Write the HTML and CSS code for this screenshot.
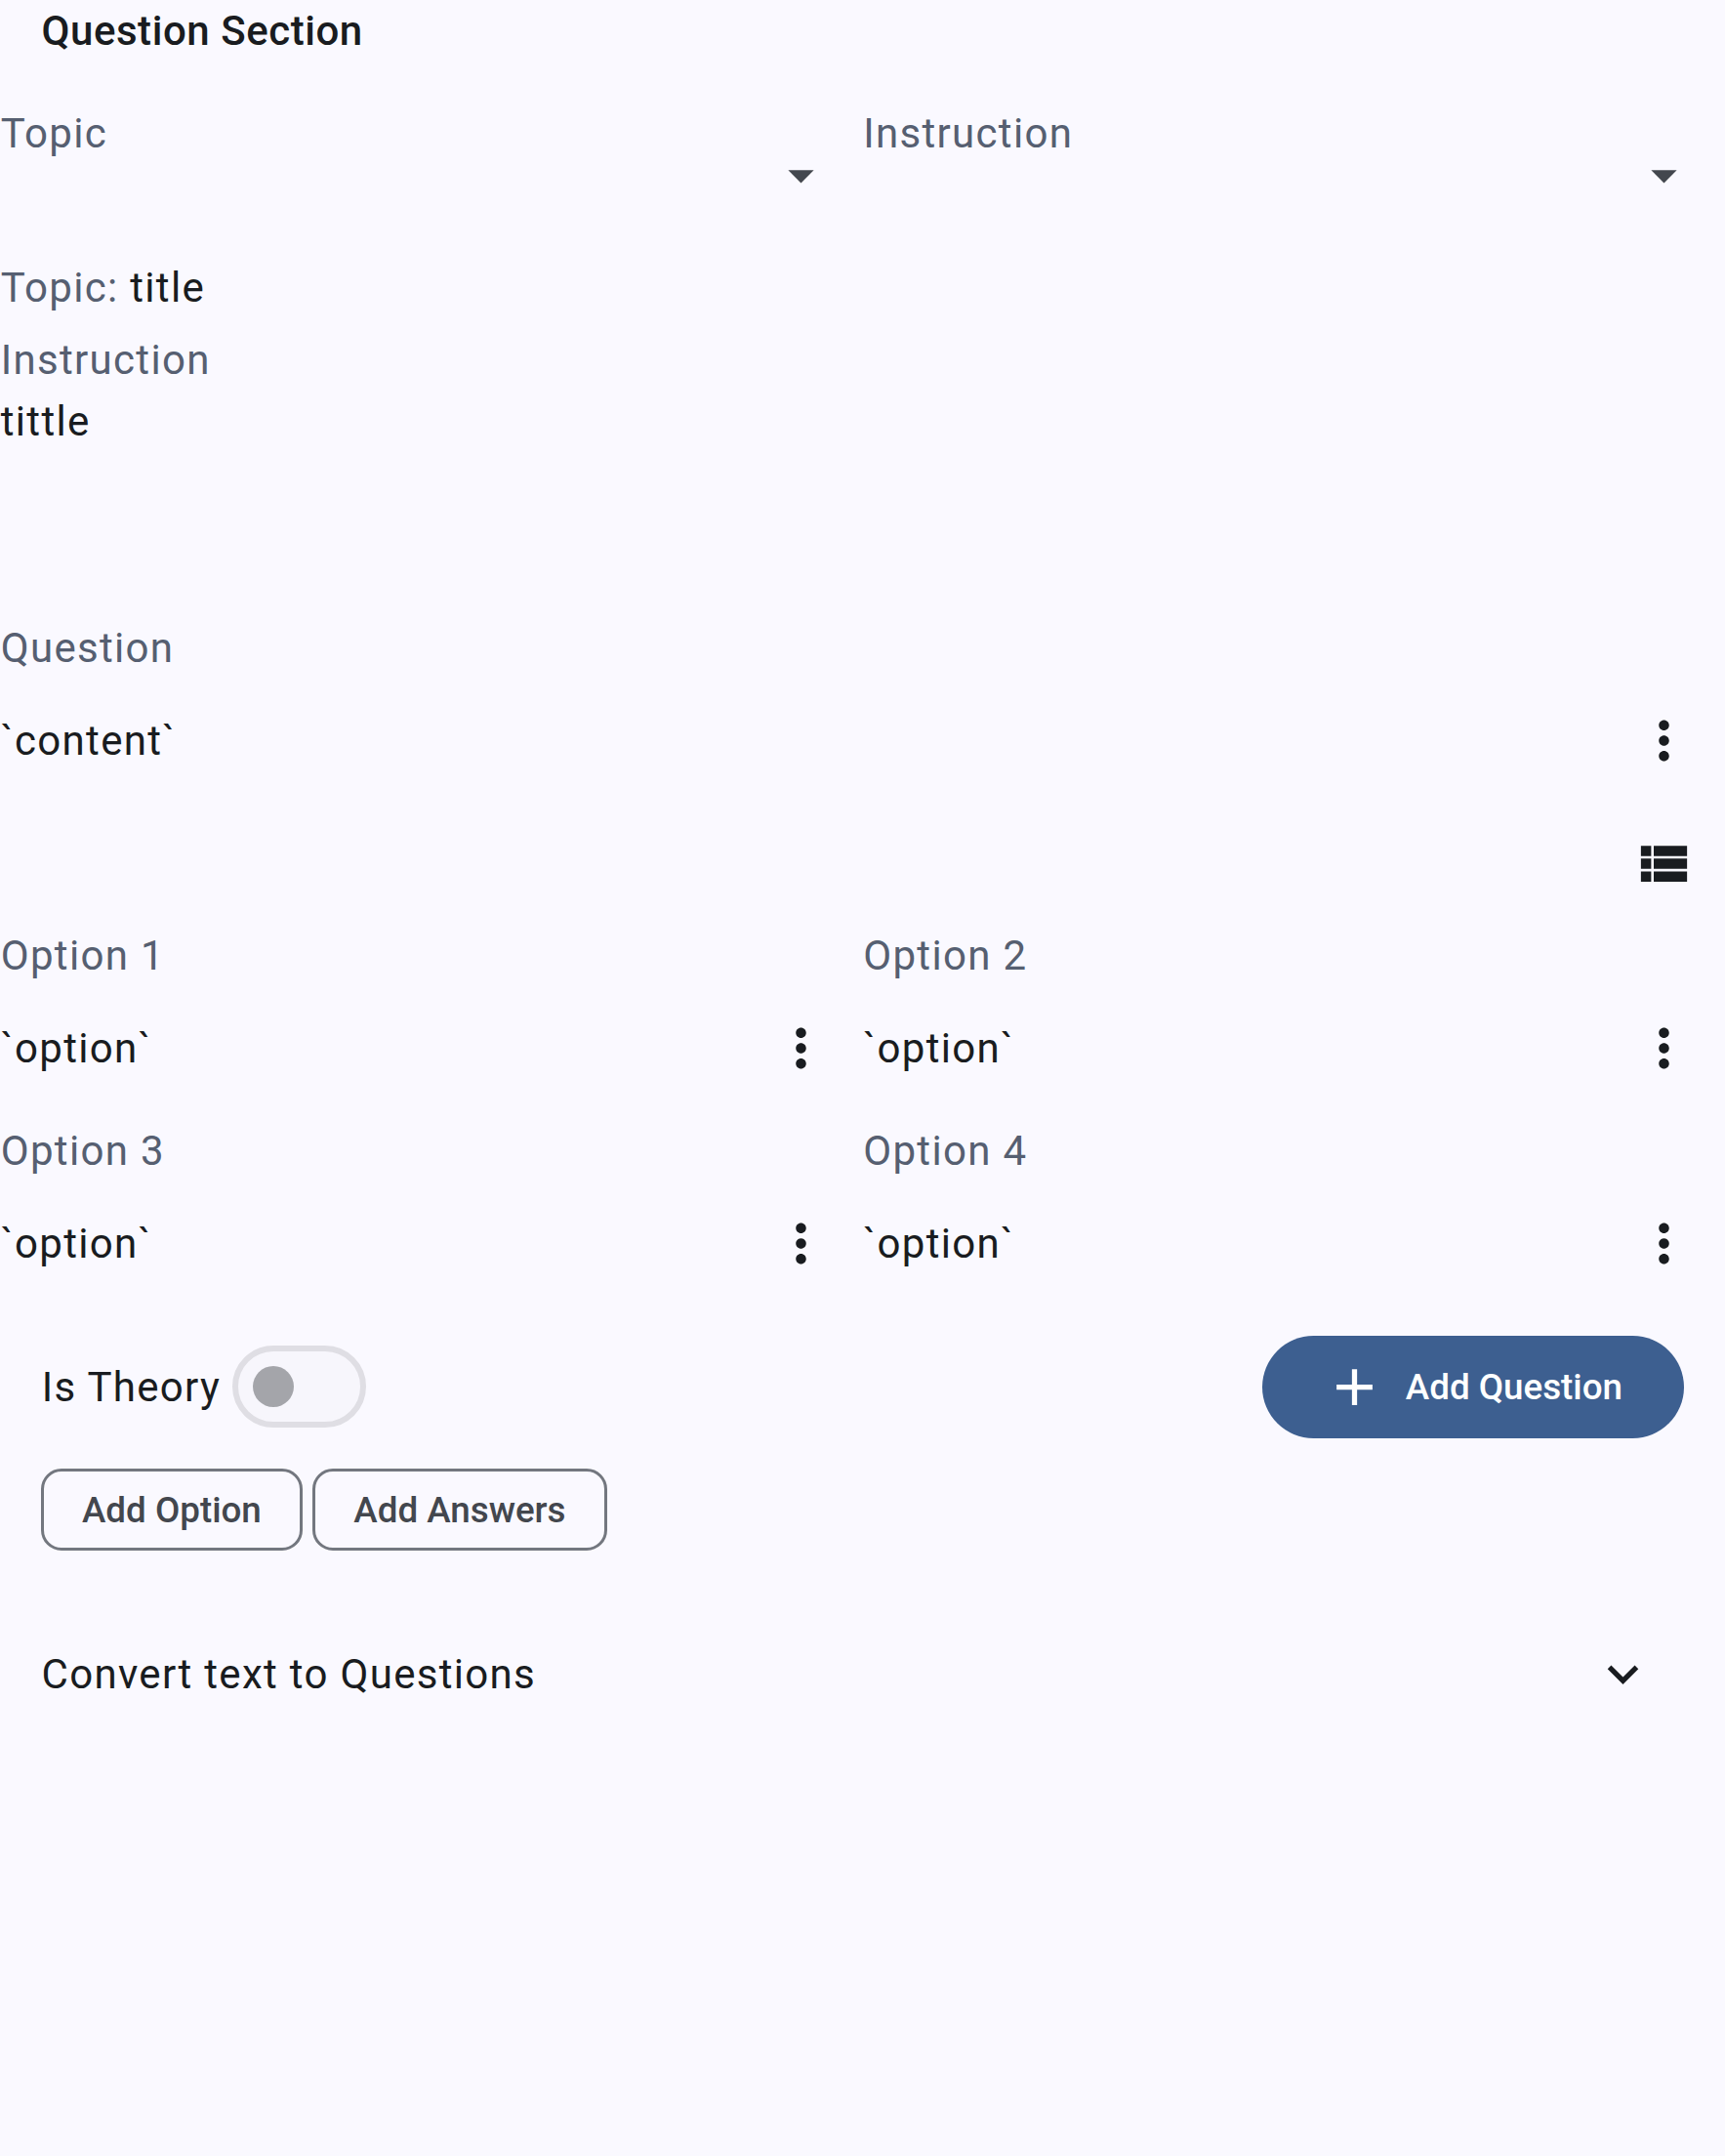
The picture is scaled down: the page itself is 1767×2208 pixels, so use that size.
FILE: index.html
```html
<!DOCTYPE html>
<html lang="en">
<head>
<meta charset="utf-8">
<title>Question Section</title>
<link rel="stylesheet" href="styles.css">
</head>
<body>
<svg class="defs" aria-hidden="true">
  <symbol id="drop" viewBox="0 0 24 24"><path d="M7 10l5 5 5-5z"/></symbol>
  <symbol id="more" viewBox="0 0 24 24"><path d="M12 8c1.100 0 2-.9 2-2s-.9-2-2-2-2 .9-2 2 .9 2 2 2zm0 2c-1.100 0-2 .9-2 2s.9 2 2 2 2-.9 2-2-.9-2-2-2zm0 6c-1.100 0-2 .9-2 2s.9 2 2 2 2-.9 2-2-.9-2-2-2z"/></symbol>
  <symbol id="list" viewBox="0 0 24 24"><path d="M3 14h4v-4H3v4zm0 5h4v-4H3v4zM3 9h4V5H3v4zm5 5h13v-4H8v4zm0 5h13v-4H8v4zM8 5v4h13V5H8z"/></symbol>
  <symbol id="add" viewBox="0 0 24 24"><path d="M19 13h-6v6h-2v-6H5v-2h6V5h2v6h6v2z"/></symbol>
  <symbol id="down" viewBox="0 0 24 24"><path d="M7.410 8.590L12 13.170l4.590-4.580L18 10l-6 6-6-6z"/></symbol>
</svg>
<main class="page">
  <h1 class="title">Question Section</h1>

  <section class="pickers">
    <div class="picker"><span class="label">Topic</span><span class="icon-button muted"><svg class="icon"><use href="#drop"/></svg></span></div>
    <div class="picker"><span class="label">Instruction</span><span class="icon-button muted"><svg class="icon"><use href="#drop"/></svg></span></div>
  </section>

  <section class="summary">
    <p class="topic"><span class="label">Topic:</span> title</p>
    <p class="label">Instruction</p>
    <p>tittle</p>
  </section>

  <section class="question">
    <p class="label">Question</p>
    <div class="field"><span>`content`</span><span class="icon-button"><svg class="icon"><use href="#more"/></svg></span></div>
    <div class="view-row"><span class="icon-button"><svg class="icon"><use href="#list"/></svg></span></div>
  </section>

  <section class="options">
    <div class="option"><p class="label">Option 1</p><div class="field"><span>`option`</span><span class="icon-button"><svg class="icon"><use href="#more"/></svg></span></div></div>
    <div class="option"><p class="label">Option 2</p><div class="field"><span>`option`</span><span class="icon-button"><svg class="icon"><use href="#more"/></svg></span></div></div>
    <div class="option"><p class="label">Option 3</p><div class="field"><span>`option`</span><span class="icon-button"><svg class="icon"><use href="#more"/></svg></span></div></div>
    <div class="option"><p class="label">Option 4</p><div class="field"><span>`option`</span><span class="icon-button"><svg class="icon"><use href="#more"/></svg></span></div></div>
  </section>

  <section class="controls">
    <div class="theory"><span class="theory-label">Is Theory</span><span class="switch"><span class="thumb"></span></span></div>
    <button class="button filled"><svg class="icon"><use href="#add"/></svg><span class="button-text">Add Question</span></button>
  </section>

  <section class="chips">
    <button class="button chip"><span class="button-text">Add Option</span></button>
    <button class="button chip"><span class="button-text">Add Answers</span></button>
  </section>

  <section class="convert"><span>Convert text to Questions</span><svg class="icon"><use href="#down"/></svg></section>
</main>
</body>
</html>
```

FILE: styles.css
```css
* { box-sizing: border-box; }

body {
  margin: 0;
  background: #faf9ff;
  color: #191c20;
  font-family: Roboto, sans-serif;
  font-size: 42px;
  line-height: 63px;
  letter-spacing: 1.3125px;
}

p { margin: 0; }

.defs { display: none; }

.page { min-height: 2208px; }

.title {
  margin: 0 42.5px 42px;
  font-size: 42px;
  font-weight: 500;
  letter-spacing: 0.55px;
}

.label { color: #565f71; }

.icon {
  display: block;
  width: 63px;
  height: 63px;
  fill: currentColor;
}

.icon-button {
  display: flex;
  align-items: center;
  justify-content: center;
  flex: none;
  width: 126px;
  height: 126px;
}

.muted { color: #43474e; }

.pickers {
  display: grid;
  grid-template-columns: 1fr 1fr;
}

.picker {
  display: flex;
  justify-content: space-between;
  padding-left: 0.75px;
}

.picker .icon-button { margin-top: 11px; }

.summary { padding: 21px 0 0 0.75px; }

.topic { margin-bottom: 11px; }

.question { margin-top: 169px; }

.question .label,
.option .label {
  height: 63.5px;
  padding-left: 0.75px;
}

.field {
  display: flex;
  align-items: center;
  justify-content: space-between;
  height: 126px;
  padding-left: 0.75px;
}

.view-row {
  display: flex;
  justify-content: flex-end;
}

.options {
  display: grid;
  grid-template-columns: 1fr 1fr;
  row-gap: 10.5px;
  margin-top: -0.5px;
}

.controls {
  display: flex;
  align-items: center;
  justify-content: space-between;
  padding: 31.5px 42px 0;
}

.theory {
  display: flex;
  align-items: center;
}

.theory-label {
  width: 196px;
  padding-left: 0.75px;
  white-space: nowrap;
}

.switch {
  display: flex;
  align-items: center;
  width: 137px;
  height: 84px;
  margin-bottom: 1px;
  padding-left: 15px;
  border: 6px solid #dfdee4;
  border-radius: 42px;
  background: #f7f6fc;
}

.thumb {
  width: 42px;
  height: 42px;
  border-radius: 50%;
  background: #a4a5aa;
}

.button {
  display: flex;
  align-items: center;
  font: 500 36.75px/52.5px Roboto, sans-serif;
  letter-spacing: 0;
}

.button-text { padding-top: 2px; }

.filled {
  gap: 21px;
  height: 105px;
  padding: 0 63px;
  border: 0;
  border-radius: 52.5px;
  background: #3d5f90;
  color: #fff;
}

.chips {
  display: flex;
  gap: 10.5px;
  padding: 31px 42px 0;
}

.chip {
  height: 84px;
  padding: 0 39px;
  border: 3px solid #73777f;
  border-radius: 21px;
  background: transparent;
  color: #43474e;
}

.convert {
  display: flex;
  align-items: center;
  justify-content: space-between;
  padding: 95px 73px 0 42.5px;
}
```
